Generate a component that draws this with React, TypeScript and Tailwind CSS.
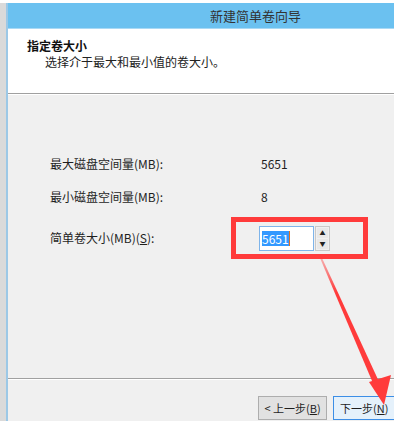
import { FC } from 'react'

const font = { fontFamily: '"Noto Sans CJK SC", "Microsoft YaHei", sans-serif' }

const Row: FC<{ label: React.ReactNode; children: React.ReactNode; className?: string }> = ({
  label,
  children,
  className,
}) => (
  <div className={`flex items-center ${className ?? ''}`}>
    <div className="w-[211px] text-[12px] text-[#1e1e1e]">{label}</div>
    <div className="text-[12px] text-[#1e1e1e]">{children}</div>
  </div>
)

const Arrow: FC = () => (
  <svg className="pointer-events-none absolute left-0 top-0" width="394" height="421" viewBox="0 0 394 421">
    <defs>
      <linearGradient id="fade" x1="320" y1="258" x2="380" y2="400" gradientUnits="userSpaceOnUse">
        <stop offset="0" stopColor="#ff3b3b" stopOpacity="0.35" />
        <stop offset="0.25" stopColor="#ff3b3b" />
        <stop offset="1" stopColor="#ff3b3b" />
      </linearGradient>
    </defs>
    <polygon points="320,258 322,258 381,386 375,388" fill="url(#fade)" />
    <polygon points="369,382 391,375 384,405" fill="#ff3b3b" />
  </svg>
)

export default function App() {
  return (
    <div className="relative flex h-[421px] w-[394px] overflow-hidden bg-white" style={font}>
      <div className="mt-[3px] w-[6px] bg-[#dadada]" />
      <div className="mt-[3px] w-[2px] bg-[#9cc8e6]" />
      <div className="flex min-w-0 flex-1 flex-col pt-[3px]">
        <div className="flex h-[25px] shrink-0 items-center bg-[#6bc1f0] pl-[202px] text-[13px] text-[#333]">
          新建简单卷向导
        </div>
        <div className="h-[1px] shrink-0 bg-[#a9d9f5]" />
        <div className="flex h-[64px] shrink-0 flex-col bg-white pl-[19px] pt-[9px]">
          <div className="text-[12px] font-bold leading-[16px] text-[#111]">指定卷大小</div>
          <div className="pl-[18px] text-[12px] leading-[16px] text-[#222]">选择介于最大和最小值的卷大小。</div>
        </div>
        <div className="h-[1px] shrink-0 bg-[#a0a0a0]" />
        <div className="h-[1px] shrink-0 bg-white" />
        <div className="flex h-[283px] shrink-0 flex-col bg-[#f0f0f0] pl-[42px] pt-[60px]">
          <Row label="最大磁盘空间量(MB):">5651</Row>
          <Row label="最小磁盘空间量(MB):" className="mt-[15px]">
            8
          </Row>
          <div className="mt-[11px] flex items-center">
            <div className="w-[181px] text-[12px] text-[#1e1e1e]">
              简单卷大小(MB)(<span className="underline">S</span>):
            </div>
            <div className="flex h-[42px] w-[137px] items-center border-[5px] border-[#ff3b3b] pl-[23px]">
              <div className="flex h-[25px] w-[55px] items-center border border-[#7eb4ea] bg-white pl-[2px]">
                <span className="bg-[#3399ff] text-[12px] leading-[15px] text-white">5651</span>
                <span className="h-[15px] w-[1px] bg-[#e07020]" />
              </div>
              <div className="ml-[1px] flex h-[25px] w-[15px] flex-col gap-[1px] border border-[#c9c9c9] bg-[#f0f0f0] p-[1px]">
                <div className="flex flex-1 items-center justify-center bg-[#e8e8e8] text-[6px] leading-none text-[#222]">▲</div>
                <div className="flex flex-1 items-center justify-center bg-[#e8e8e8] text-[6px] leading-none text-[#222]">▼</div>
              </div>
            </div>
          </div>
        </div>
        <div className="h-[1px] shrink-0 bg-[#a0a0a0]" />
        <div className="h-[1px] shrink-0 bg-white" />
        <div className="flex flex-1 items-end gap-[6px] bg-[#f0f0f0] pb-[1px] pl-[250px]">
          <div className="flex h-[24px] w-[69px] shrink-0 items-center justify-center border border-[#adadad] bg-[#e1e1e1] text-[11px] text-[#1e1e1e]">
            &lt;&nbsp;上一步(<span className="underline">B</span>)
          </div>
          <div className="flex h-[24px] w-[70px] shrink-0 items-center border border-[#3c8ee6] bg-[#e5f1fb] pl-[6px] text-[11px] text-[#1e1e1e]">
            下一步(<span className="underline">N</span>)
          </div>
        </div>
      </div>
      <Arrow />
    </div>
  )
}
